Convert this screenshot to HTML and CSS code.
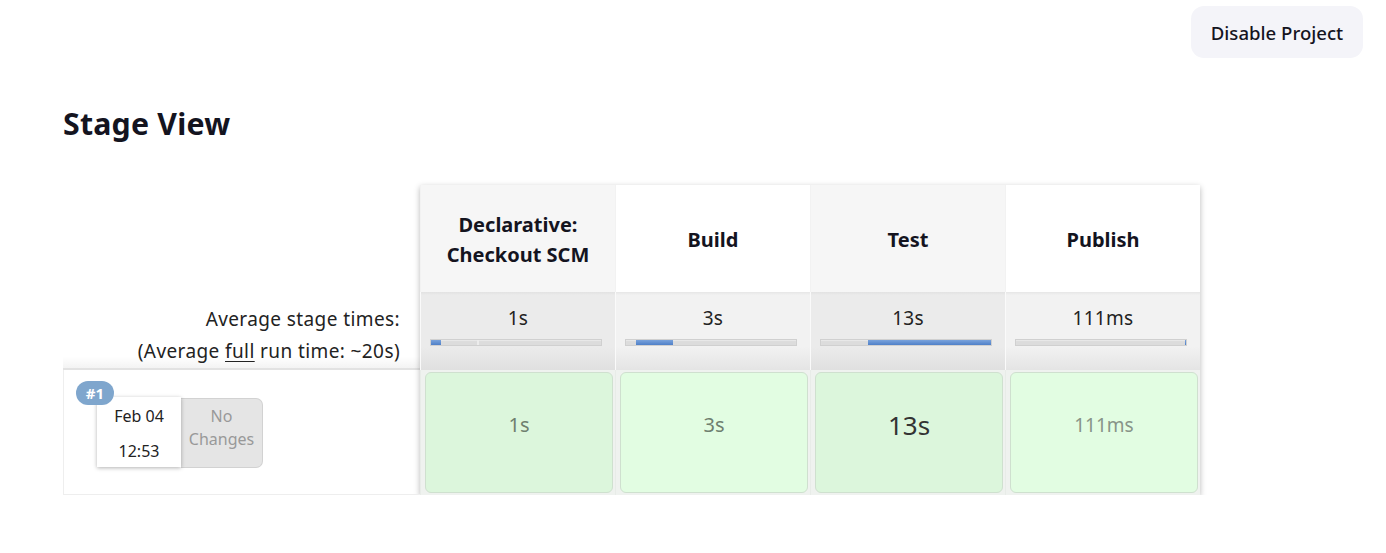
FILE: index.html
```html
<!DOCTYPE html>
<html>
<head>
<meta charset="utf-8">
<link rel="stylesheet" href="styles.css">
</head>
<body>
<div class="topbar">
  <button class="btn">Disable Project</button>
</div>
<h1 class="title">Stage View</h1>
<div class="stageview">
  <div class="left">
    <div class="left-head"></div>
    <div class="left-avg">
      <div>Average stage times:</div>
      <div>(Average <u>full</u> run time: ~20s)</div>
    </div>
    <div class="left-build">
      <span class="badge">#1</span>
      <div class="build-info">
        <div class="date">
          <div>Feb 04</div>
          <div>12:53</div>
        </div>
        <div class="changes">No<br>Changes</div>
      </div>
    </div>
  </div>
  <div class="table">
    <div class="col alt">
      <div class="head">Declarative:<br>Checkout SCM</div>
      <div class="avg"><div class="avg-t">1s</div><div class="track"><div class="gap" style="width:0px"></div><div class="fill" style="width:10px"></div><div class="notch" style="margin-left:36px"></div></div></div>
      <div class="res"><div class="cell t-mid">1s</div></div>
    </div>
    <div class="col">
      <div class="head">Build</div>
      <div class="avg"><div class="avg-t">3s</div><div class="track"><div class="gap" style="width:10px"></div><div class="fill" style="width:37px"></div></div></div>
      <div class="res"><div class="cell t-mid">3s</div></div>
    </div>
    <div class="col alt">
      <div class="head">Test</div>
      <div class="avg"><div class="avg-t">13s</div><div class="track"><div class="gap" style="width:47px"></div><div class="fill" style="width:124px"></div></div></div>
      <div class="res"><div class="cell t-big">13s</div></div>
    </div>
    <div class="col">
      <div class="head">Publish</div>
      <div class="avg"><div class="avg-t">111ms</div><div class="track"><div class="gap" style="width:170px"></div><div class="fill" style="width:1px"></div></div></div>
      <div class="res"><div class="cell t-small">111ms</div></div>
    </div>
  </div>
</div>
</body>
</html>
```
FILE: styles.css
```css
* { box-sizing: border-box; }
body {
  margin: 0;
  font-family: "Noto Sans", "Open Sans", sans-serif;
  color: #14141f;
  background: #fff;
}
.topbar {
  display: flex;
  justify-content: flex-end;
  padding: 6px 23px 0 0;
}
.btn {
  width: 172px;
  height: 52px;
  border: none;
  border-radius: 13px;
  background: #f4f4f9;
  font-family: "Noto Sans", sans-serif;
  font-size: 18.6px;
  font-weight: 500;
  color: #14141f;
  padding: 0;
}
.title {
  margin: 46px 0 0 63px;
  font-size: 30.3px;
  font-weight: 700;
  line-height: 40px;
  letter-spacing: 0.2px;
}
.stageview {
  display: flex;
  margin: 41px 0 0 63px;
}
.left {
  width: 357px;
  display: flex;
  flex-direction: column;
}
.left-head { height: 107px; }
.left-avg {
  height: 78px;
  text-align: right;
  padding: 11px 20px 0 0;
  font-size: 19px;
  letter-spacing: 0.4px;
  line-height: 32px;
  color: #222;
  border-bottom: 2px solid #e2e2e2;
  background: linear-gradient(to bottom, #fff 0, #fff 85%, #f3f3f3 100%);
}
.left-avg u { text-decoration-thickness: 1px; text-underline-offset: 3px; }
.left-build {
  position: relative;
  height: 125px;
  border-left: 1px solid #eee;
  border-bottom: 1px solid #eee;
  padding: 27px 0 0 33px;
}
.badge {
  position: absolute;
  left: 12px;
  top: 11px;
  z-index: 2;
  width: 38px;
  height: 24px;
  border-radius: 12px;
  background: #7fa6cd;
  color: #fff;
  font-size: 15px;
  font-weight: 700;
  line-height: 24px;
  text-align: center;
}
.build-info {
  display: flex;
}
.date {
  width: 84px;
  height: 70px;
  background: #fff;
  box-shadow: 0 1px 4px rgba(0,0,0,0.3);
  font-size: 16px;
  line-height: 35px;
  padding-top: 2px;
  text-align: center;
  color: #222;
  position: relative;
  z-index: 1;
}
.changes {
  width: 82px;
  height: 70px;
  background: #e5e5e5;
  border: 1px solid #d2d2d2;
  border-left: none;
  border-radius: 0 7px 7px 0;
  color: #999;
  font-size: 16px;
  line-height: 23px;
  text-align: center;
  padding-top: 6px;
  margin-top: 1px;
}
.table {
  display: flex;
  width: 780px;
  box-shadow: 0 2px 6px rgba(0,0,0,0.28);
}
.col {
  width: 195px;
  display: flex;
  flex-direction: column;
}
.head {
  height: 107px;
  display: flex;
  align-items: center;
  justify-content: center;
  text-align: center;
  font-size: 20px;
  font-weight: 700;
  line-height: 30px;
  background: #fff;
  border-left: 1px solid #f2f2f2;
  padding-top: 2px;
}
.col.alt .head { background: #f6f6f6; }
.avg {
  height: 78px;
  background: linear-gradient(to bottom, #e6e6e6 0, #f2f2f2 4%, #f2f2f2 70%, #e4e4e4 100%);
  border-left: 1px solid #fafafa;
  padding: 12px 9px 0 9px;
}
.col.alt .avg {
  background: linear-gradient(to bottom, #e2e2e2 0, #ebebeb 4%, #ebebeb 70%, #e0e0e0 100%);
}
.avg-t {
  text-align: center;
  font-size: 19px;
  letter-spacing: 0.3px;
  line-height: 28px;
  color: #222;
}
.track {
  display: flex;
  margin-top: 7px;
  height: 7px;
  width: 172px;
  background: #dcdcdc;
  border: 1px solid #d0d0d0;
  box-shadow: inset 0 1px 1px rgba(255,255,255,0.4);
}
.gap { height: 100%; }
.fill {
  height: 100%;
  background: linear-gradient(to bottom, #7aa3dc, #4f80c8);
}
.notch {
  width: 2px;
  height: 100%;
  background: #ececec;
}
.res {
  height: 125px;
  background: #eff2ef;
  padding: 2px 2px 2px 4px;
  border-left: 1px solid #e8ece8;
}
.cell {
  height: 100%;
  border: 1px solid #cfe0cf;
  border-radius: 6px;
  background: #e2fde2;
  display: flex;
  align-items: center;
  justify-content: center;
  padding-bottom: 16px;
}
.col.alt .cell { background: #dcf6dc; }
.t-mid { font-size: 20px; color: #6f7f6f; }
.t-big { font-size: 26px; color: #333; }
.t-small { font-size: 19px; color: #889488; }
```
